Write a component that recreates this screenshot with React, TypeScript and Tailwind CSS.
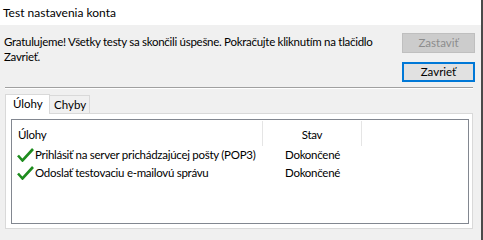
import React from "react";

const Check = () => (
  <svg width="17" height="14" viewBox="0 0 17 14" className="shrink-0">
    <path d="M1 7.5 L5.5 12.5 L16 1" fill="none" stroke="#1e8c1e" strokeWidth="2.6" strokeLinecap="butt" strokeLinejoin="miter" />
  </svg>
);

export default function App() {
  const font = { fontFamily: 'Lato, sans-serif' };
  return (
    <div className="w-[483px] h-[240px] flex overflow-hidden text-[12px] text-black whitespace-nowrap" style={font}>
      <div className="w-[481px] flex flex-col">
        <div className="h-[25px] bg-white flex items-center pl-[3px] leading-none">Test nastavenia konta</div>
        <div className="flex-1 bg-[#f0f0f0] flex flex-col text-[11.5px] tracking-[-0.28px]">
          <div className="flex">
            <div className="flex-1 min-w-0 pl-[4px] pt-[9px] leading-[15px]">
              <div>Gratulujeme! Všetky testy sa skončili úspešne. Pokračujte kliknutím na tlačidlo</div>
              <div>Zavrieť.</div>
            </div>
            <div className="w-[73px] shrink-0 mr-[6px] mt-[8px] flex flex-col gap-[9px] tracking-normal">
              <div className="h-[20px] bg-[#cccccc] border border-[#bfbfbf] text-[#8c8c8c] flex items-center justify-center">Zastaviť</div>
              <div className="h-[20px] bg-[#e1e1e1] border-2 border-[#0078d7] flex items-center justify-center">Zavrieť</div>
            </div>
          </div>
          <div className="ml-[5px] mr-[8px] mt-[5px] h-[2px] border-t border-[#a0a0a0] border-b border-b-white"></div>
          <div className="ml-[5px] mr-[8px] mt-[4px] flex items-end h-[20px] tracking-normal">
            <div className="w-[45px] h-[20px] bg-white border border-b-0 border-[#d9d9d9] pl-[7px] flex items-center relative z-10 -mb-px pb-[1px]">Úlohy</div>
            <div className="w-[40px] h-[18px] bg-[#f0f0f0] border border-l-0 border-b-0 border-[#d9d9d9] pl-[4px] flex items-center">Chyby</div>
          </div>
          <div className="ml-[5px] mr-[8px] h-[116px] bg-white border border-[#d9d9d9] pt-[5px] pl-[5px] pr-[3px] pb-[4px]">
            <div className="h-full border border-[#828790] bg-white flex flex-col">
              <div className="h-[26px] flex items-stretch pt-[1px]">
                <div className="w-[251px] pl-[6px] flex items-center border-r border-[#e5e5e5] pt-[2px]">Úlohy</div>
                <div className="w-[99px] flex items-center justify-center border-r border-[#e5e5e5] pt-[2px]">Stav</div>
                <div className="flex-1"></div>
              </div>
              <div className="h-[18px] flex items-center">
                <div className="w-[251px] pl-[5px] flex items-center gap-[1px]"><Check /><span>Prihlásiť na server prichádzajúcej pošty (POP3)</span></div>
                <div className="pl-[22px]">Dokončené</div>
              </div>
              <div className="h-[18px] flex items-center">
                <div className="w-[251px] pl-[5px] flex items-center gap-[1px]"><Check /><span>Odoslať testovaciu e-mailovú správu</span></div>
                <div className="pl-[22px]">Dokončené</div>
              </div>
            </div>
          </div>
        </div>
      </div>
      <div className="w-[2px] bg-[#4a4a4a]"></div>
    </div>
  );
}
